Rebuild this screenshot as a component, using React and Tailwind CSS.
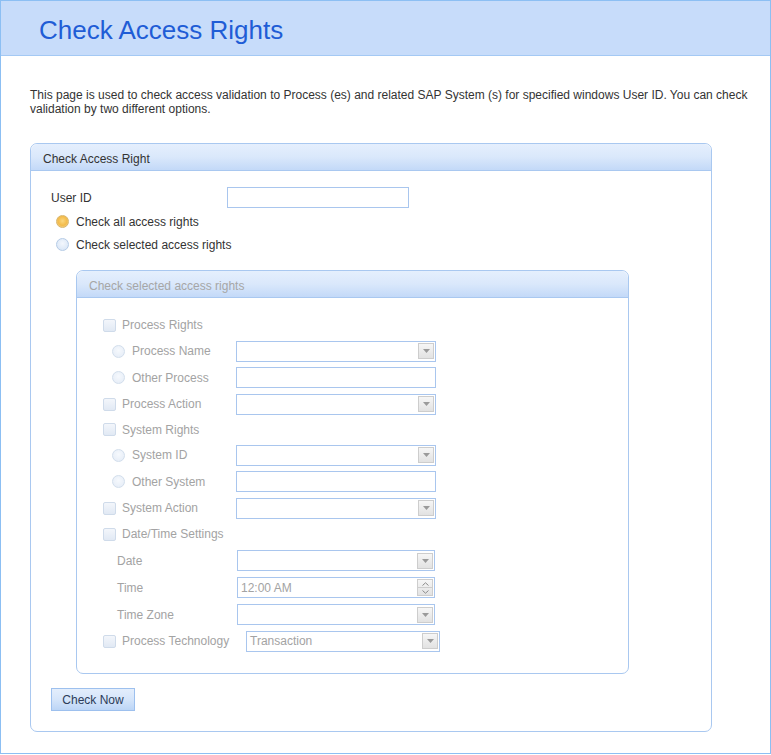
import React from "react";

const font = { fontFamily: '"Liberation Sans", Arial, sans-serif' };

const Radio = ({ checked, disabled }) => (
  <span
    className={`block w-[13px] h-[13px] rounded-full border shrink-0 ${
      checked
        ? "border-[#d8b56a] bg-[radial-gradient(circle_at_50%_45%,#fbd77e_0%,#f3bb4b_55%,#f6e3b8_100%)]"
        : disabled
        ? "border-[#d2deec] bg-[radial-gradient(circle_at_50%_40%,#f6f9fd_0%,#e3ebf6_100%)]"
        : "border-[#b5cbe6] bg-[radial-gradient(circle_at_50%_40%,#f3f7fd_0%,#d3e2f5_100%)]"
    }`}
  />
);

const Checkbox = () => (
  <span className="block w-[13px] h-[13px] rounded-[2px] border border-[#cfdbea] bg-gradient-to-b from-[#f3f6fb] to-[#e1e9f4] shrink-0" />
);

const DropButton = () => (
  <span className="w-[16px] h-[16px] border border-[#cdcdcd] bg-gradient-to-b from-[#f6f6f6] to-[#e2e2e2] flex items-center justify-center">
    <svg width="7" height="4" viewBox="0 0 7 4">
      <path d="M0 0h7L3.5 4z" fill="#9a9a9a" />
    </svg>
  </span>
);

const Select = ({ width = "w-[200px]", value }) => (
  <div
    className={`${width} h-[21px] border border-[#a9c6ee] bg-white flex items-center justify-between pl-[3px] pr-[1px] text-[12px] text-[#a3a3a3]`}
  >
    <span>{value}</span>
    <DropButton />
  </div>
);

const TextBox = ({ width = "w-[200px]" }) => (
  <div className={`${width} h-[21px] border border-[#a9c6ee] bg-white`} />
);

const TimeBox = () => (
  <div className="w-[198px] h-[21px] border border-[#a9c6ee] bg-white flex items-center justify-between pl-[3px] pr-[1px] text-[12px] text-[#a3a3a3]">
    <span>12:00 AM</span>
    <span className="w-[16px] h-[17px] border border-[#cdcdcd] bg-gradient-to-b from-[#f6f6f6] to-[#e2e2e2] flex flex-col">
      <span className="flex-1 flex items-center justify-center border-b border-[#cdcdcd]">
        <svg width="7" height="4" viewBox="0 0 7 4">
          <path d="M0.5 3.5L3.5 0.8L6.5 3.5" stroke="#8a8a8a" fill="none" />
        </svg>
      </span>
      <span className="flex-1 flex items-center justify-center">
        <svg width="7" height="4" viewBox="0 0 7 4">
          <path d="M0.5 0.5L3.5 3.2L6.5 0.5" stroke="#8a8a8a" fill="none" />
        </svg>
      </span>
    </span>
  </div>
);

const PanelHeader = ({ children, muted }) => (
  <div
    className={`h-[27px] rounded-t-[7px] border-b border-[#a9c8f0] bg-gradient-to-b from-[#e5effd] via-[#dae8fb] to-[#c3d9f8] flex items-center pl-[12px] pt-[3px] text-[12px] ${
      muted ? "text-[#a6a6a6]" : "text-[#333]"
    }`}
  >
    {children}
  </div>
);

const Row = ({ h, children }) => (
  <div className={`${h} flex items-center text-[12px] text-[#a3a3a3]`}>{children}</div>
);

export default function App() {
  return (
    <div style={font} className="w-[771px] h-[755px] bg-white">
      <div className="w-[771px] h-[754px] border border-[#8cbff3] flex flex-col">
        <div className="h-[55px] bg-[#c7dcfa] border-b border-[#a4c9f4] flex items-center pl-[38px] shrink-0">
          <h1 className="text-[26px] text-[#1f5dd6] leading-none mt-[3px]">Check Access Rights</h1>
        </div>

        <div className="pl-[29px] pr-[14px]">
          <p className="mt-[32px] text-[12px] leading-[14px] text-[#333]">
            This page is used to check access validation to Process (es) and related SAP System (s) for
            specified windows User ID. You can check validation by two different options.
          </p>

          <div className="mt-[27px] w-[682px] border border-[#a9c8f0] rounded-[7px]">
            <PanelHeader>Check Access Right</PanelHeader>
            <div className="pl-[20px] pt-[16px] pb-[20px]">
              <div className="flex items-center h-[21px] text-[12px] text-[#333]">
                <span className="w-[176px]">User ID</span>
                <TextBox width="w-[182px]" />
              </div>
              <div className="h-[23px] flex items-center gap-[7px] pl-[5px] mt-[2px] text-[12px] text-[#333]">
                <Radio checked />
                <span>Check all access rights</span>
              </div>
              <div className="h-[23px] flex items-center gap-[7px] pl-[5px] text-[12px] text-[#333]">
                <Radio />
                <span>Check selected access rights</span>
              </div>

              <div className="ml-[25px] mt-[14px] w-[553px] border border-[#a9c8f0] rounded-[7px]">
                <PanelHeader muted>Check selected access rights</PanelHeader>
                <div className="pt-[14px] pb-[19px] pl-[26px]">
                  <Row h="h-[26px]">
                    <Checkbox />
                    <span className="ml-[6px]">Process Rights</span>
                  </Row>
                  <Row h="h-[26px]">
                    <span className="ml-[9px]"><Radio disabled /></span>
                    <span className="ml-[7px] w-[104px]">Process Name</span>
                    <Select />
                  </Row>
                  <Row h="h-[27px]">
                    <span className="ml-[9px]"><Radio disabled /></span>
                    <span className="ml-[7px] w-[104px]">Other Process</span>
                    <TextBox />
                  </Row>
                  <Row h="h-[26px]">
                    <Checkbox />
                    <span className="ml-[6px] w-[114px]">Process Action</span>
                    <Select />
                  </Row>
                  <Row h="h-[25px]">
                    <Checkbox />
                    <span className="ml-[6px]">System Rights</span>
                  </Row>
                  <Row h="h-[26px]">
                    <span className="ml-[9px]"><Radio disabled /></span>
                    <span className="ml-[7px] w-[104px]">System ID</span>
                    <Select />
                  </Row>
                  <Row h="h-[27px]">
                    <span className="ml-[9px]"><Radio disabled /></span>
                    <span className="ml-[7px] w-[104px]">Other System</span>
                    <TextBox />
                  </Row>
                  <Row h="h-[26px]">
                    <Checkbox />
                    <span className="ml-[6px] w-[114px]">System Action</span>
                    <Select />
                  </Row>
                  <Row h="h-[26px]">
                    <Checkbox />
                    <span className="ml-[6px]">Date/Time Settings</span>
                  </Row>
                  <Row h="h-[27px]">
                    <span className="ml-[14px] w-[120px]">Date</span>
                    <Select width="w-[198px]" />
                  </Row>
                  <Row h="h-[27px]">
                    <span className="ml-[14px] w-[120px]">Time</span>
                    <TimeBox />
                  </Row>
                  <Row h="h-[27px]">
                    <span className="ml-[14px] w-[120px]">Time Zone</span>
                    <Select width="w-[198px]" />
                  </Row>
                  <Row h="h-[26px]">
                    <Checkbox />
                    <span className="ml-[6px] w-[124px]">Process Technology</span>
                    <Select width="w-[194px]" value="Transaction" />
                  </Row>
                </div>
              </div>

              <button className="mt-[14px] w-[84px] h-[23px] border border-[#9dc0ee] bg-gradient-to-b from-[#e4eefc] via-[#d5e5fa] to-[#bcd5f6] text-[12px] text-[#2c3b58]">
                Check Now
              </button>
            </div>
          </div>
        </div>
      </div>
    </div>
  );
}
